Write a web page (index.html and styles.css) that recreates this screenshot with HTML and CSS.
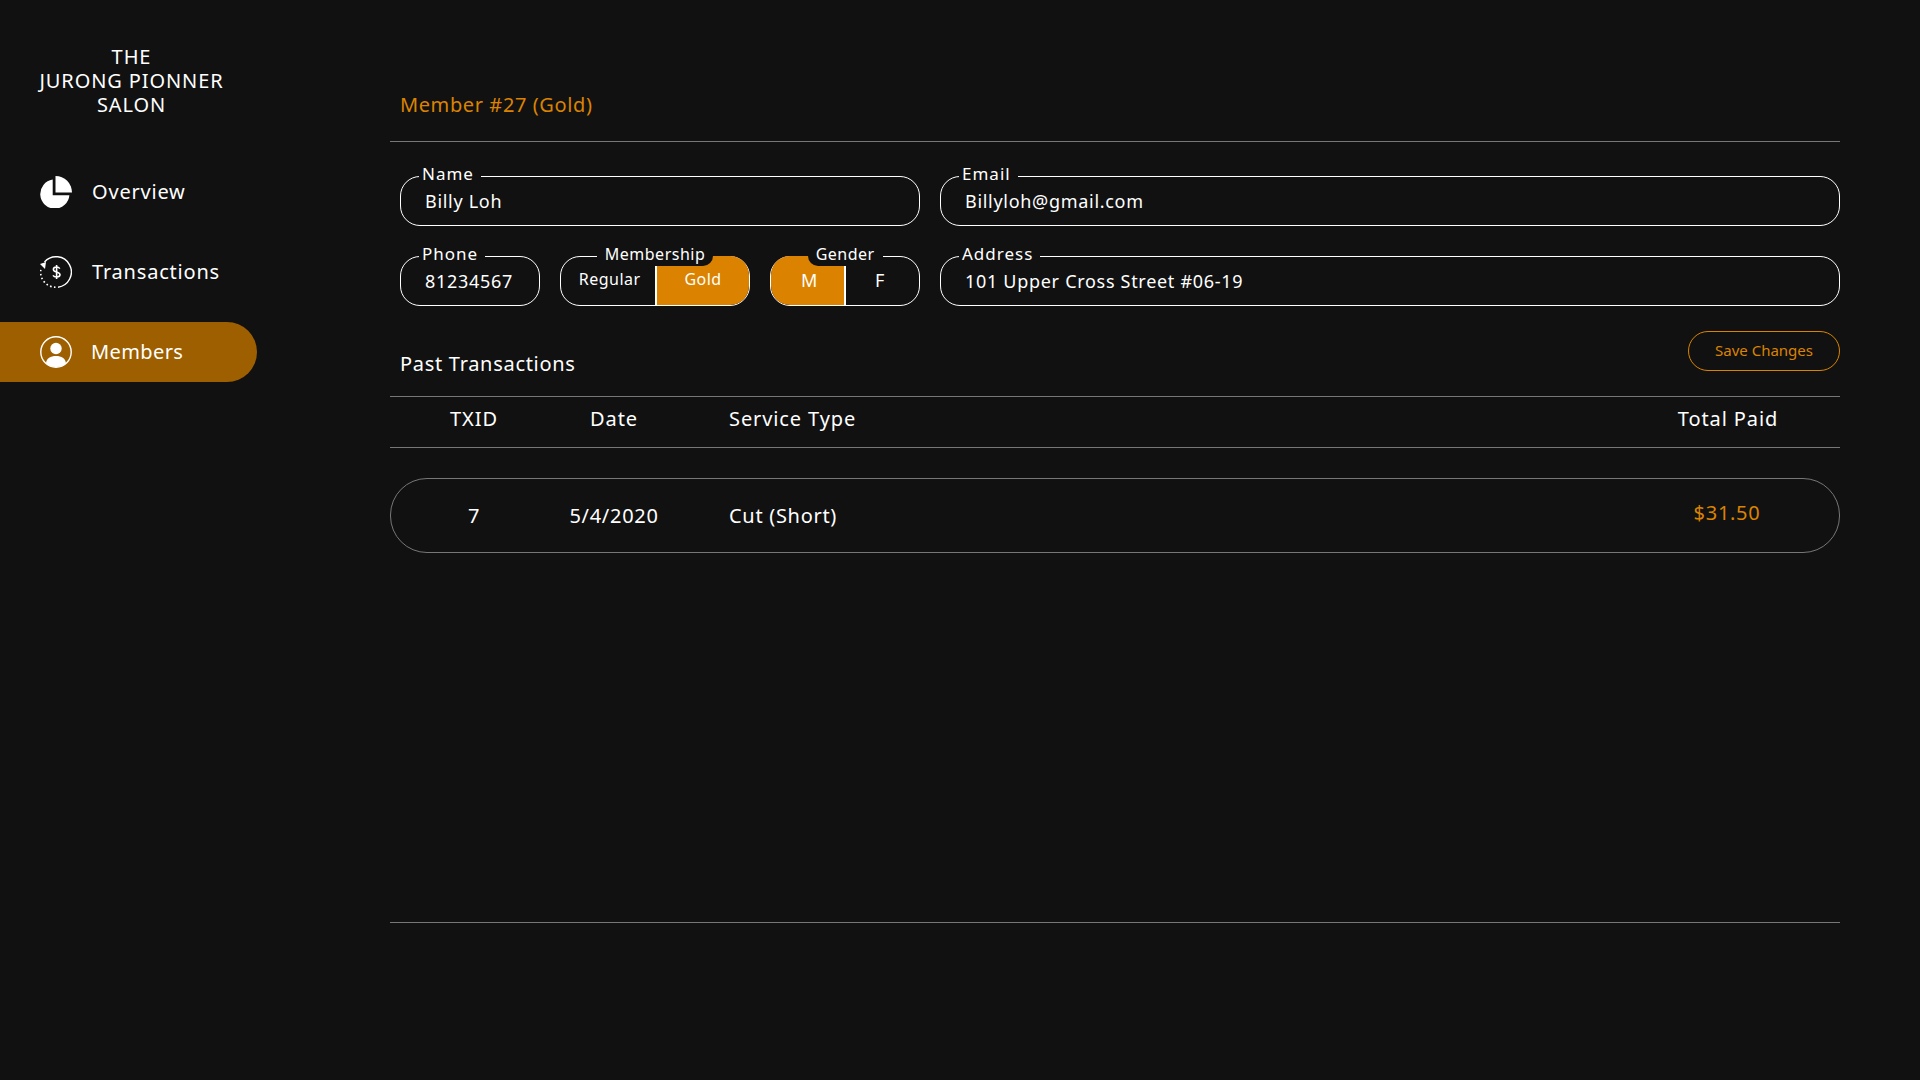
FILE: index.html
```html
<!DOCTYPE html>
<html lang="en">
<head>
    <meta charset="UTF-8">
    <meta name="viewport" content="width=device-width, initial-scale=1.0">
    <title>Member #27</title>
    <link rel="stylesheet" href="styles.css">
</head>
<body>
    <aside class="sidebar">
        <div class="logo">THE<br>JURONG PIONNER<br>SALON</div>
        <nav class="nav">
            <a class="nav-item">
                <svg class="nav-icon" viewBox="0 0 32 32" fill="#fff">
                    <path d="M15.5 0A16.5 16.5 0 0 1 32 16.5H15.5Z"/>
                    <path d="M12.7 3.6V19.3H29.4A14.6 14.6 0 1 1 12.7 3.6Z"/>
                </svg>
                <span>Overview</span>
            </a>
            <a class="nav-item">
                <svg class="nav-icon" viewBox="0 0 32 32" fill="none" stroke="#fff">
                    <path d="M4.5 6A15.3 15.3 0 1 1 18 31.2" stroke-width="1.4"/>
                    <path d="M15.5 31.3A15.3 15.3 0 0 1 1 12.5" stroke-width="1.7" stroke-dasharray="1.6 2.4"/>
                    <path d="M0 8L6 6L5 13Z" fill="#fff" stroke="none"/>
                    <path d="M19.8 12.6C19 11.4 17.8 11 16.5 11C14.7 11 13.4 11.9 13.4 13.4C13.4 16.6 20 15.2 20 18.6C20 20.2 18.5 21 16.6 21C15 21 13.7 20.5 13 19.3M16.6 9V23" stroke-width="1.6"/>
                </svg>
                <span>Transactions</span>
            </a>
            <a class="nav-item active">
                <svg class="nav-icon" viewBox="0 0 32 32">
                    <circle cx="16" cy="16" r="15.2" fill="none" stroke="#fff" stroke-width="1.4"/>
                    <circle cx="16" cy="12.5" r="5.7" fill="#fff"/>
                    <path d="M6 27.2C6.5 22.4 10.5 20 16 20S25.5 22.4 26 27.2A15 15 0 0 1 16 31A15 15 0 0 1 6 27.2Z" fill="#fff"/>
                </svg>
                <span>Members</span>
            </a>
        </nav>
    </aside>

    <main class="content">
        <h1 class="member-title">Member #27 (Gold)</h1>

        <form class="member-form">
            <fieldset class="field name-field">
                <legend>Name</legend>
                <span class="value">Billy Loh</span>
            </fieldset>
            <fieldset class="field email-field">
                <legend>Email</legend>
                <span class="value">Billyloh@gmail.com</span>
            </fieldset>
            <div class="split-row">
                <fieldset class="field phone-field">
                    <legend>Phone</legend>
                    <span class="value">81234567</span>
                </fieldset>
                <fieldset class="field toggle membership-field">
                    <legend>Membership</legend>
                    <div class="seg seg-regular">Regular</div>
                    <div class="seg seg-gold on">Gold</div>
                </fieldset>
                <fieldset class="field toggle gender-field">
                    <legend>Gender</legend>
                    <div class="seg seg-m on">M</div>
                    <div class="seg seg-f">F</div>
                </fieldset>
            </div>
            <fieldset class="field address-field">
                <legend>Address</legend>
                <span class="value">101 Upper Cross Street #06-19</span>
            </fieldset>
        </form>

        <div class="past-head">
            <h2 class="past-title">Past Transactions</h2>
            <button class="save-btn" type="button">Save Changes</button>
        </div>

        <div class="tx-row tx-header">
            <div class="center">TXID</div>
            <div class="center">Date</div>
            <div class="service">Service Type</div>
            <div class="center">Total Paid</div>
        </div>

        <div class="tx-list">
            <div class="tx-row tx-item">
                <div class="center">7</div>
                <div class="center">5/4/2020</div>
                <div class="service">Cut (Short)</div>
                <div class="center paid">$31.50</div>
            </div>
        </div>
    </main>
</body>
</html>
```

FILE: styles.css
```css
* {
    box-sizing: border-box;
}
html, body {
    height: 100%;
}
body {
    margin: 0;
    display: flex;
    background-color: #111111;
    color: #fff;
    font-family: "Noto Sans", sans-serif;
    overflow: hidden;
}

/* sidebar */
.sidebar {
    width: 390px;
    flex-shrink: 0;
    padding-top: 45px;
}
.logo {
    width: 263px;
    text-align: center;
    font-size: 20px;
    line-height: 24px;
    letter-spacing: 0.9px;
}
.nav {
    margin-top: 45px;
    display: flex;
    flex-direction: column;
    gap: 20px;
}
.nav-item {
    width: 257px;
    height: 60px;
    padding-left: 40px;
    display: flex;
    align-items: center;
    gap: 20px;
    font-size: 20px;
    letter-spacing: 0.8px;
    border-radius: 0 30px 30px 0;
}
.nav-item span {
    padding-bottom: 2px;
}
.nav-item.active {
    background-color: #9e5f00;
    letter-spacing: 0.4px;
    gap: 19px;
}
.nav-icon {
    width: 32px;
    height: 32px;
    flex-shrink: 0;
}

/* main panel */
.content {
    width: 1450px;
    height: 923px;
    padding-top: 91px;
    border-bottom: 1px solid #777;
}
.member-title {
    margin: 0;
    height: 51px;
    padding-left: 10px;
    font-size: 20px;
    line-height: 27px;
    font-weight: 400;
    letter-spacing: 0.6px;
    color: #db8300;
    border-bottom: 1px solid #777;
}

/* form */
.member-form {
    margin-top: 24px;
    padding-left: 10px;
    display: grid;
    grid-template-columns: 520px 900px;
    justify-content: space-between;
    row-gap: 20px;
}
.field {
    margin: 0;
    padding: 0 0 0 24px;
    height: 60px;
    border: 1px solid #fff;
    border-radius: 20px;
    min-width: 0;
}
.field legend {
    margin-left: -6px;
    padding: 0 7px 4px 3px;
    font-size: 17px;
    line-height: 16px;
    letter-spacing: 1px;
}
.value {
    display: block;
    font-size: 18px;
    line-height: 24px;
    letter-spacing: 0.7px;
    margin-top: 3px;
}
.split-row {
    display: flex;
    gap: 20px;
}
.phone-field {
    width: 140px;
}

/* toggles */
.toggle {
    padding: 0;
    display: flex;
}
.toggle legend {
    position: relative;
    z-index: 1;
    background-color: #111111;
    margin: 0 auto;
    padding: 0 8px 4px;
    font-size: 16px;
    border-radius: 0 0 10px 10px;
    letter-spacing: 0.5px;
}
.membership-field {
    width: 191px;
}
.gender-field {
    width: 150px;
}
.seg {
    height: 49px;
    margin-top: -10px;
    padding-bottom: 3px;
    display: flex;
    align-items: center;
    justify-content: center;
    font-size: 16px;
    letter-spacing: 0.5px;
}
.seg-regular {
    width: 94px;
    padding-left: 4px;
}
.seg-gold {
    flex: 1;
}
.seg-m, .seg-f {
    flex: 1;
    padding-bottom: 2px;
    font-size: 18px;
}
.seg-m {
    padding-left: 4px;
}
.seg-f {
    padding-right: 5px;
}
.seg.on {
    background-color: #db8300;
}
.seg-gold {
    border-left: 2px solid #fff;
    border-radius: 0 19px 19px 0;
}
.seg-m {
    border-right: 2px solid #fff;
    border-radius: 19px 0 0 19px;
}

/* past transactions */
.past-head {
    margin-top: 25px;
    height: 66px;
    padding-left: 10px;
    display: flex;
    justify-content: space-between;
    align-items: flex-start;
    border-bottom: 1px solid #777;
}
.past-title {
    margin: 0;
    padding-top: 19px;
    font-size: 20px;
    line-height: 27px;
    font-weight: 400;
    letter-spacing: 0.7px;
}
.save-btn {
    width: 152px;
    height: 40px;
    padding: 0 0 2px;
    background: none;
    border: 1px solid #db8300;
    border-radius: 20px;
    color: #db8300;
    font-family: inherit;
    font-size: 15px;
    cursor: pointer;
}
.tx-row {
    display: grid;
    grid-template-columns: 140px 140px 1fr 224px;
    padding-left: 14px;
    align-items: center;
    font-size: 20px;
    letter-spacing: 0.9px;
}
.center {
    text-align: center;
}
.service {
    padding-left: 45px;
}
.tx-header {
    height: 51px;
    border-bottom: 1px solid #777;
    padding-bottom: 7px;
}
.tx-list {
    padding-top: 30px;
}
.tx-item {
    height: 75px;
    padding-left: 13px;
    border: 1px solid #777;
    border-radius: 37px;
    letter-spacing: 0.7px;
}
.paid {
    color: #db8300;
    padding-bottom: 6px;
}
```
